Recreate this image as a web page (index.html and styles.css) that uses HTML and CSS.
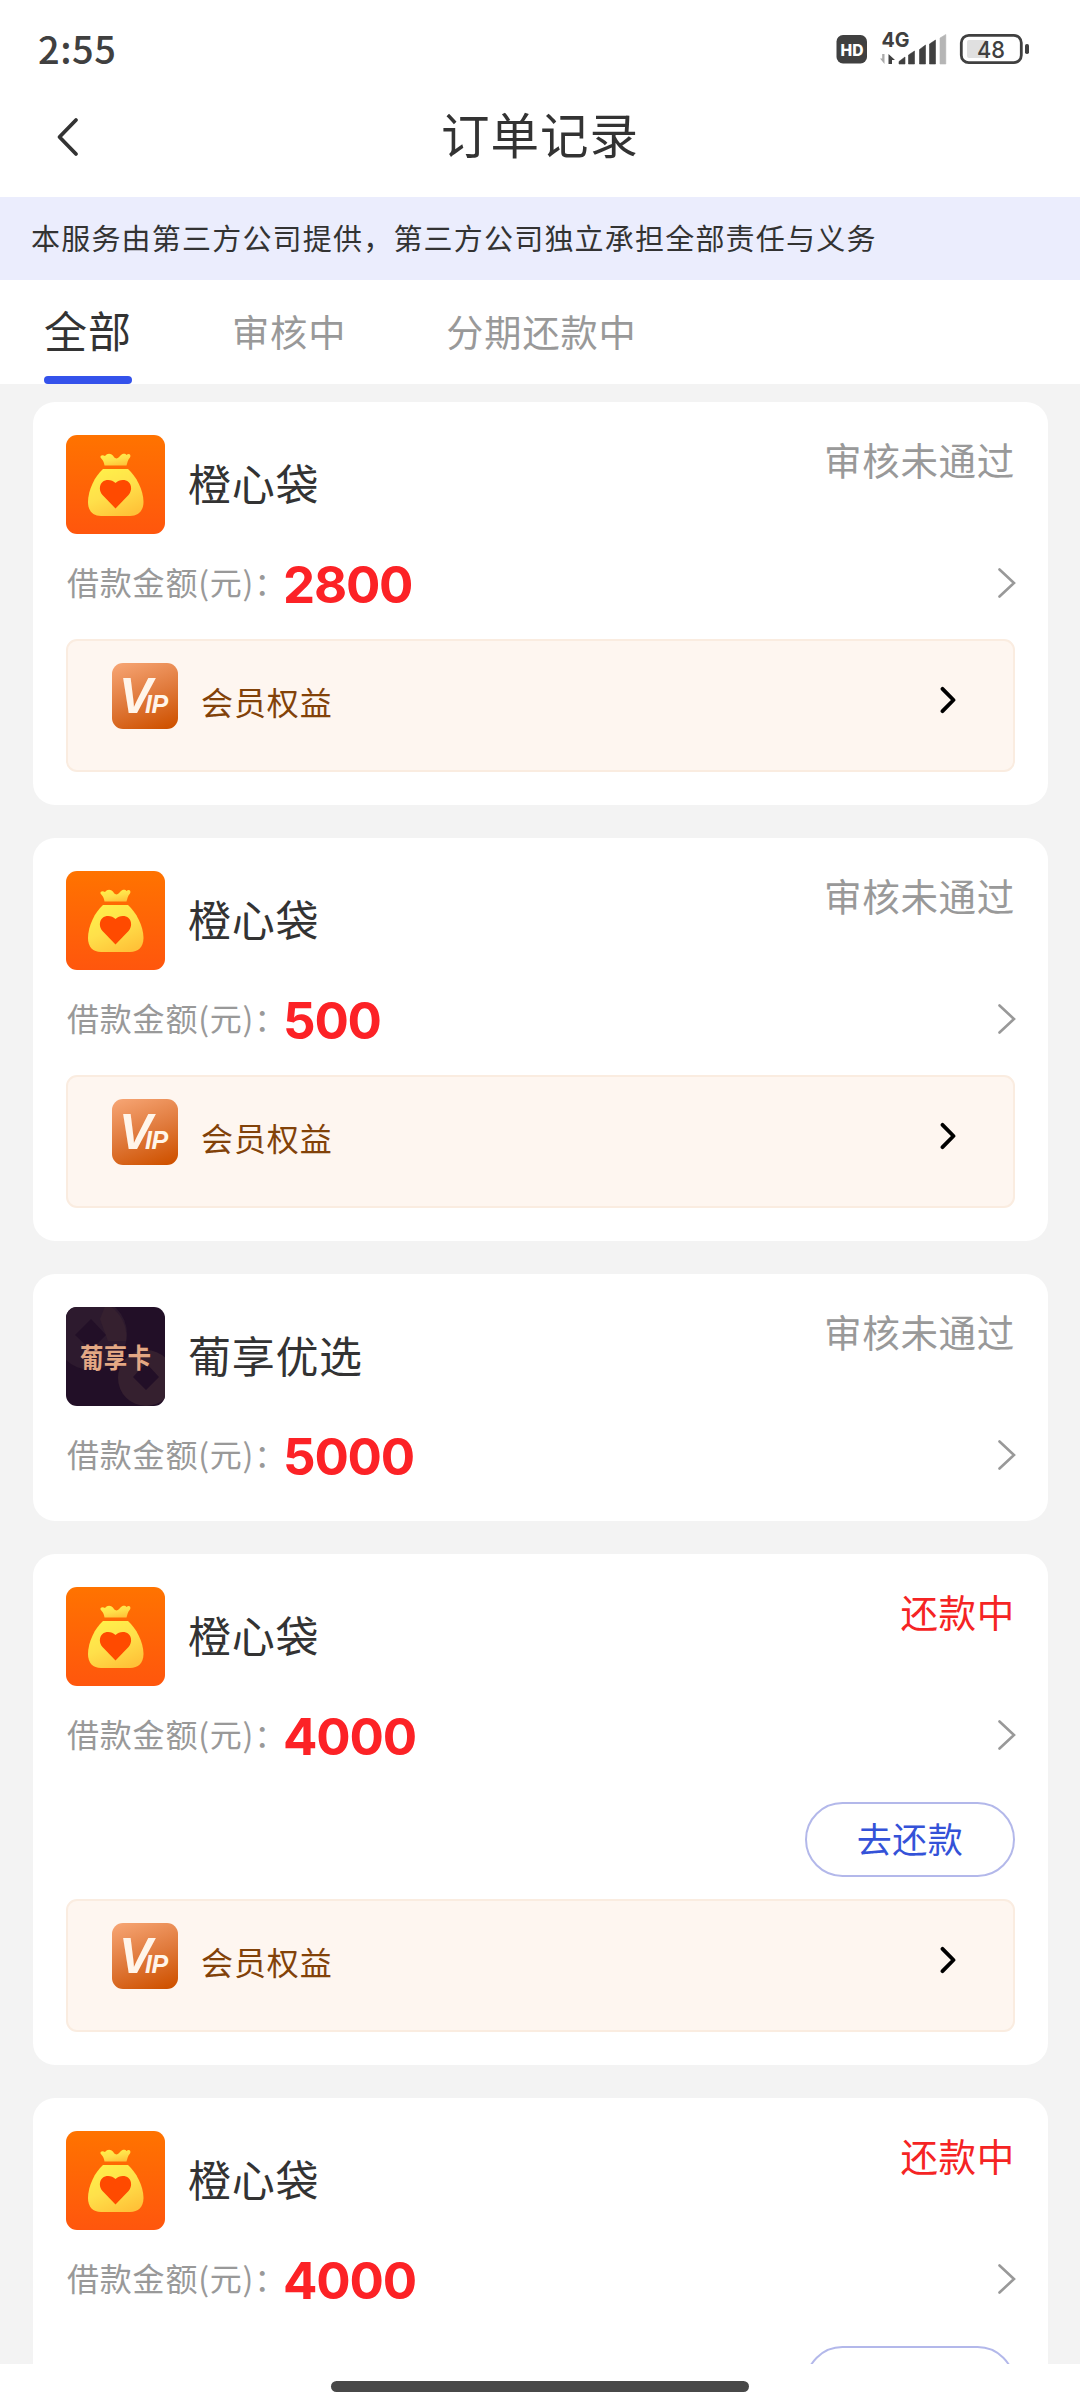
FILE: index.html
```html
<!DOCTYPE html>
<html lang="zh-CN">
<head>
<meta charset="utf-8">
<title>订单记录</title>
<link rel="stylesheet" href="styles.css">
</head>
<body>
<svg class="defs" width="0" height="0" aria-hidden="true">
  <defs>
    <linearGradient id="orange" x1="0" y1="0" x2="0" y2="1"><stop offset="0" stop-color="#ff7300"/><stop offset="1" stop-color="#ff560d"/></linearGradient>
    <linearGradient id="gold" x1=".2" y1="0" x2=".7" y2="1"><stop offset="0" stop-color="#fff04a"/><stop offset=".5" stop-color="#ffe04a"/><stop offset="1" stop-color="#ffc238"/></linearGradient>
  </defs>
  <symbol id="bag" viewBox="0 0 99 99">
    <rect width="99" height="99" fill="url(#orange)"/>
    <path d="M38.5 30.500C38 26 36 24.500 34.500 22.500C34 20 37 19.500 39 21C42 17.500 45.500 18.500 48 22C50 24.500 52 23.500 54 21C56.500 18 59.500 18.500 60.500 20C63 17.500 65.500 20 64 22.500C61.500 25 61.500 28 60.500 30.500Z" fill="url(#gold)"/>
    <path d="M37 34H62C70 41 77.500 55 77.500 67C77.500 76 72 81 64 81H35C27 81 22 76 22 67C22 55 29 41 37 34Z" fill="url(#gold)"/>
    <path d="M49.500 73.500L36.500 60C33 56 33 50 36.500 47C40 44 46 44.500 49.500 48C53 44.500 59 44 62.500 47C66 50 66 56 62.500 60Z" fill="#ff4a00"/>
  </symbol>
  <symbol id="more" viewBox="0 0 18 30">
    <path d="M1.500 1.500L16 15L1.500 28.500" fill="none" stroke="#999" stroke-width="2.600" stroke-linecap="round"/>
  </symbol>
  <symbol id="go" viewBox="0 0 17 28">
    <path d="M2.500 2.800L13.500 14L2.500 25.200" fill="none" stroke="#000" stroke-width="3.800" stroke-linecap="round" stroke-linejoin="round"/>
  </symbol>
</svg>

<div class="statusbar">
  <span class="clock">2:55</span>
  <svg class="indicators" width="196" height="40" viewBox="834 28 196 40">
    <rect x="836.500" y="35" width="30.500" height="28.500" rx="6.500" fill="#404040"/>
    <text class="hd" x="840.500" y="55.500" font-size="15.500" textLength="23" lengthAdjust="spacingAndGlyphs" fill="#fff">HD</text>
    <text class="net" x="881.500" y="47" font-size="20.500" textLength="28" lengthAdjust="spacingAndGlyphs" fill="#404040">4G</text>
    <path d="M884.500 54V64L880 58.500H882.200V54Z" fill="#aaa"/>
    <path d="M888.500 64V54L895 60H892V64Z" fill="#404040"/>
    <path d="M899 64V61.500L905 57V64ZM908.500 64V55L914.500 51V64ZM919.500 64V49.500L925.500 45V64ZM929.500 64V44L935.500 40V64Z" fill="#404040" stroke="#404040" stroke-width=".6" stroke-linejoin="round"/>
    <path d="M940 64V38L945.800 34.500V64Z" fill="#b5b5b5" stroke="#b5b5b5" stroke-width=".6" stroke-linejoin="round"/>
    <rect x="961.300" y="35.300" width="60" height="27.400" rx="7.500" fill="none" stroke="#404040" stroke-width="2.800"/>
    <path d="M969 40H987V58H969Q967 58 967 56V42Q967 40 969 40Z" fill="#e0e0e0"/>
    <text class="battery" x="977" y="57.500" font-size="23.500" textLength="28" lengthAdjust="spacingAndGlyphs" fill="#404040">48</text>
    <rect x="1025" y="44" width="4" height="10" rx="1.800" fill="#404040"/>
  </svg>
</div>

<header class="navbar">
  <svg class="back" width="24" height="40" viewBox="0 0 24 40"><path d="M20 3L3.500 20L20 37" fill="none" stroke="#333" stroke-width="3.800" stroke-linecap="round" stroke-linejoin="round"/></svg>
  <h1>订单记录</h1>
</header>

<p class="notice">本服务由第三方公司提供，第三方公司独立承担全部责任与义务</p>

<nav class="tabs">
  <span class="tab active">全部</span>
  <span class="tab">审核中</span>
  <span class="tab">分期还款中</span>
</nav>

<main class="orders">
  <article class="card">
    <div class="head"><svg class="logo"><use href="#bag"/></svg><h2>橙心袋</h2><span class="state">审核未通过</span></div>
    <div class="amount"><span class="label">借款金额(元)：</span><strong>2800</strong><svg class="more"><use href="#more"/></svg></div>
    <div class="member"><span class="vip"><b>V</b><i>IP</i></span><span class="member-text">会员权益</span><svg class="go"><use href="#go"/></svg></div>
  </article>
  <article class="card">
    <div class="head"><svg class="logo"><use href="#bag"/></svg><h2>橙心袋</h2><span class="state">审核未通过</span></div>
    <div class="amount"><span class="label">借款金额(元)：</span><strong>500</strong><svg class="more"><use href="#more"/></svg></div>
    <div class="member"><span class="vip"><b>V</b><i>IP</i></span><span class="member-text">会员权益</span><svg class="go"><use href="#go"/></svg></div>
  </article>
  <article class="card">
    <div class="head">
      <svg class="logo" viewBox="0 0 99 99">
        <rect width="99" height="99" fill="#220f27"/>
        <circle cx="25" cy="27" r="36" fill="#2d1a2e"/>
        <path d="M40 -3A36 36 0 0 1 60 34L42 34L34 12Z" fill="#35202f"/>
        <circle cx="80" cy="71" r="28" fill="#35202f"/>
        <path d="M25 12L40 28L25 43L9 28ZM80 56L93 70L80 83L67 70Z" fill="#220f27"/>
        <text class="puxiang-mark" transform="translate(14 61) scale(1 1.180)" textLength="71" font-size="23.500" fill="#e3a884">葡享卡</text>
      </svg>
      <h2>葡享优选</h2><span class="state">审核未通过</span>
    </div>
    <div class="amount"><span class="label">借款金额(元)：</span><strong>5000</strong><svg class="more"><use href="#more"/></svg></div>
  </article>
  <article class="card">
    <div class="head"><svg class="logo"><use href="#bag"/></svg><h2>橙心袋</h2><span class="state due">还款中</span></div>
    <div class="amount"><span class="label">借款金额(元)：</span><strong>4000</strong><svg class="more"><use href="#more"/></svg></div>
    <button class="repay">去还款</button>
    <div class="member"><span class="vip"><b>V</b><i>IP</i></span><span class="member-text">会员权益</span><svg class="go"><use href="#go"/></svg></div>
  </article>
  <article class="card">
    <div class="head"><svg class="logo"><use href="#bag"/></svg><h2>橙心袋</h2><span class="state due">还款中</span></div>
    <div class="amount"><span class="label">借款金额(元)：</span><strong>4000</strong><svg class="more"><use href="#more"/></svg></div>
    <button class="repay"></button>
  </article>
</main>

<footer class="gesture"><span class="pill"></span></footer>
</body>
</html>
```
FILE: styles.css
```css
* { box-sizing: border-box; }

body {
  margin: 0;
  height: 2408px;
  overflow: hidden;
  display: flex;
  flex-direction: column;
  background: #fff;
  color: #333;
  font-family: "Noto Sans CJK SC", sans-serif;
}

h1, h2, p { margin: 0; font-weight: 400; }
svg { display: block; flex: none; }

.statusbar {
  flex: none;
  height: 78px;
  padding: 28px 50px 0 38px;
  display: flex;
  justify-content: space-between;
}
.clock {
  font-size: 38px;
  line-height: 40px;
  font-weight: 500;
  color: #404040;
  letter-spacing: 0.5px;
}
.hd { font-family: Inter, sans-serif; font-weight: 800; }
.net { font-family: Inter, sans-serif; font-weight: 700; }
.battery { font-family: Inter, sans-serif; font-weight: 500; }

.navbar {
  flex: none;
  height: 119px;
  padding: 0 56px;
  display: grid;
  grid-template-columns: 24px 1fr 24px;
  align-items: start;
}
.back { margin-top: 39px; }
h1 {
  padding-top: 20px;
  font-size: 48.500px;
  letter-spacing: 1px;
  line-height: 70px;
  text-align: center;
}

.notice {
  flex: none;
  height: 83px;
  padding-left: 31px;
  background: #ebedfd;
  font-size: 29px;
  letter-spacing: 1.200px;
  line-height: 80px;
}

.tabs {
  flex: none;
  height: 104px;
  padding-left: 44px;
  display: flex;
  align-items: stretch;
}
.tab {
  margin-right: 100px;
  color: #999;
  font-size: 37.200px;
  letter-spacing: 0.900px;
  line-height: 103px;
}
.tab.active {
  display: flex;
  flex-direction: column;
  justify-content: space-between;
  color: #333;
  font-size: 43px;
  letter-spacing: 1px;
  line-height: 98px;
  height: 104px;
}
.tab.active::after {
  content: "";
  height: 8px;
  margin-top: -2px;
  border-radius: 4px;
  background: #3452eb;
}

.orders {
  flex: none;
  height: 1980px;
  padding: 18px 32px 0 33px;
  display: flex;
  flex-direction: column;
  gap: 33px;
  overflow: hidden;
  background: #f3f3f3;
}
.card {
  flex: none;
  display: flex;
  flex-direction: column;
  padding: 33px;
  border-radius: 22px;
  background: #fff;
}
.head { display: flex; height: 99px; }
.logo { width: 99px; height: 99px; border-radius: 11px; }
h2 {
  margin-left: 23px;
  font-size: 43px;
  letter-spacing: 0.700px;
  line-height: 95px;
}
.state {
  margin-left: auto;
  font-size: 37.500px;
  letter-spacing: 0.700px;
  line-height: 47px;
  color: #999;
}
.state.due { color: #f52424; }

.amount {
  display: flex;
  align-items: center;
  height: 66px;
  margin-top: 16px;
}
.label {
  width: 217px;
  padding-left: 1px;
  font-size: 32px;
  letter-spacing: 0.800px;
  line-height: 62px;
  height: 66px;
  white-space: nowrap;
  color: #999;
}
.amount strong {
  padding-top: 3px;
  font-family: Inter, sans-serif;
  font-size: 51px;
  font-weight: 700;
  letter-spacing: -1.200px;
  line-height: 66px;
  color: #fc2226;
}
.more { width: 18px; height: 30px; margin-left: auto; margin-right: -1px; }

.member {
  display: flex;
  height: 133px;
  margin-top: 23px;
  padding: 22px 56px 0 44px;
  border: 2px solid #faece0;
  border-radius: 11px;
  background: #fef6f0;
}
.vip {
  width: 66px;
  height: 66px;
  padding-left: 7px;
  border-radius: 11px;
  display: flex;
  align-items: baseline;
  background: linear-gradient(160deg, #f5a270 5%, #e07a3c 50%, #cf5200 95%);
  font-family: "Liberation Sans", sans-serif;
  font-weight: 700;
  font-style: italic;
  line-height: 67px;
  color: #fff5ea;
}
.vip b { width: 26px; font-size: 50px; letter-spacing: -8px; }
.vip i { font-size: 25px; letter-spacing: -0.500px; }
.puxiang-mark { font-weight: 700; }
.member-text {
  margin-left: 23px;
  font-size: 32px;
  letter-spacing: 0.900px;
  line-height: 76px;
  color: #824209;
}
.go { width: 17px; height: 28px; margin: 23px 0 0 auto; }

.repay {
  align-self: flex-end;
  width: 210px;
  height: 75px;
  margin-top: 34px;
  padding: 0 0 4px;
  border: 2px solid #b3b8ea;
  border-radius: 38px;
  background: #fff;
  font: 400 35px/67px "Noto Sans CJK SC", sans-serif;
  letter-spacing: 0.500px;
  color: #3452d8;
}
.repay + .member { margin-top: 22px; }

.gesture {
  flex: none;
  height: 44px;
  padding-top: 17px;
  display: flex;
  justify-content: center;
  align-items: flex-start;
  background: #fff;
}
.pill { width: 418px; height: 11px; border-radius: 6px; background: #484848; }
```
